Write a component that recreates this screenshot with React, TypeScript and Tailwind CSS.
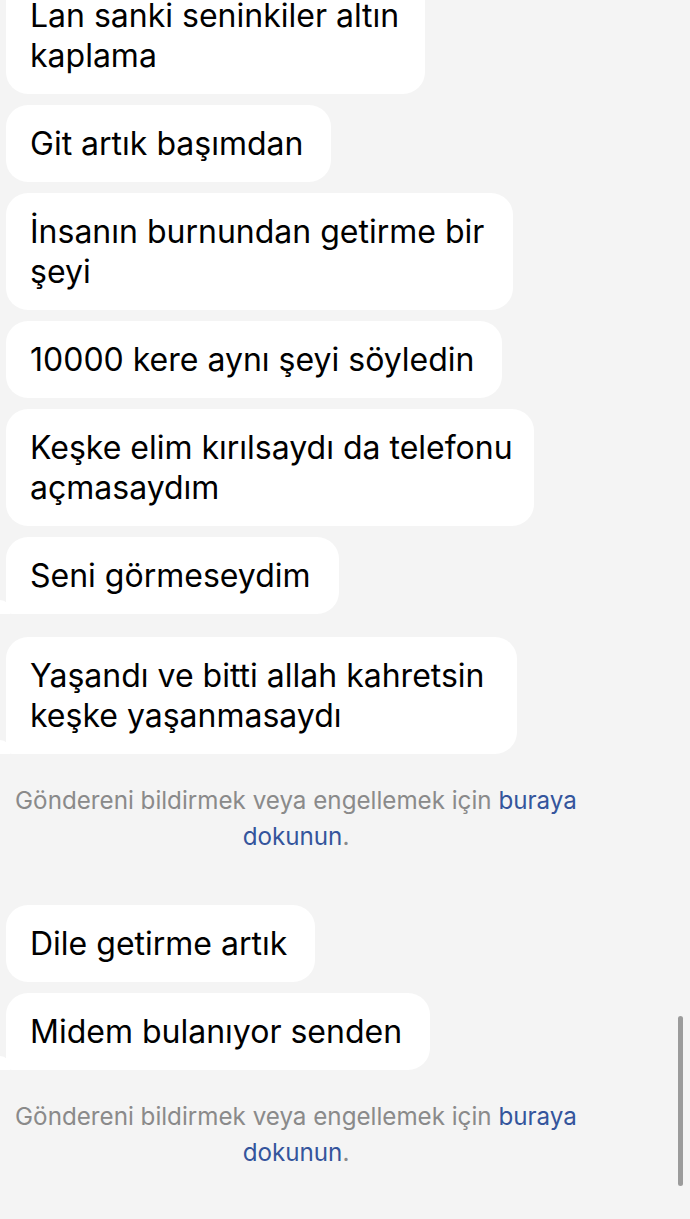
import React from 'react';

type Msg = { lines: string[]; width?: string; tail?: boolean; gapTop?: boolean };

const groups: { messages: Msg[] }[] = [
  {
    messages: [
      { lines: ['Lan sanki seninkiler altın', 'kaplama'], width: 'w-[419px]' },
      { lines: ['Git artık başımdan'] },
      { lines: ['İnsanın burnundan getirme bir', 'şeyi'], width: 'w-[507px]' },
      { lines: ['10000 kere aynı şeyi söyledin'] },
      { lines: ['Keşke elim kırılsaydı da telefonu', 'açmasaydım'], width: 'w-[528px]' },
      { lines: ['Seni görmeseydim'], tail: true },
      {
        lines: ['Yaşandı ve bitti allah kahretsin', 'keşke yaşanmasaydı'],
        width: 'w-[511px]',
        tail: true,
        gapTop: true,
      },
    ],
  },
  {
    messages: [
      { lines: ['Dile getirme artık'] },
      { lines: ['Midem bulanıyor senden'], tail: true },
    ],
  },
];

function Bubble({ msg }: { msg: Msg }) {
  return (
    <div className={`relative self-start ${msg.gapTop ? 'mt-[12px]' : ''}`}>
      <div
        className={`bg-white rounded-[22px] pl-[24px] pr-[28px] pt-[19px] pb-[18px] text-[32px] leading-[40px] text-black whitespace-nowrap ${
          msg.tail ? 'rounded-bl-[6px]' : ''
        } ${msg.width ?? ''}`}
      >
        {msg.lines.map((l, i) => (
          <span key={i} className="block">
            {l}
          </span>
        ))}
      </div>
      {msg.tail && (
        <div className="absolute left-[-6px] bottom-0 w-[10px] h-[14px] bg-white rounded-tr-[10px]" />
      )}
    </div>
  );
}

function Notice() {
  return (
    <p className="w-[580px] text-center text-[24.2px] leading-[36px] text-[#8a8a8a] mt-[29px] mb-[50px]">
      Göndereni bildirmek veya engellemek için{' '}
      <span className="text-[#34559c]">buraya dokunun</span>.
    </p>
  );
}

export default function App() {
  return (
    <div
      className="relative w-[690px] h-[1219px] overflow-hidden bg-[#f4f4f4]"
      style={{ fontFamily: 'Inter, "Noto Sans", sans-serif' }}
    >
      <div className="flex flex-col pl-[6px] -mt-[23px]">
        {groups.map((g, gi) => (
          <div key={gi} className="flex flex-col">
            <div className="flex flex-col gap-[11px]">
              {g.messages.map((m, i) => (
                <Bubble key={i} msg={m} />
              ))}
            </div>
            <Notice />
          </div>
        ))}
      </div>

      {/* scroll indicator */}
      <div className="absolute right-[7px] top-[1016px] w-[5px] h-[170px] bg-[#9b9b9b] rounded-full" />
    </div>
  );
}
